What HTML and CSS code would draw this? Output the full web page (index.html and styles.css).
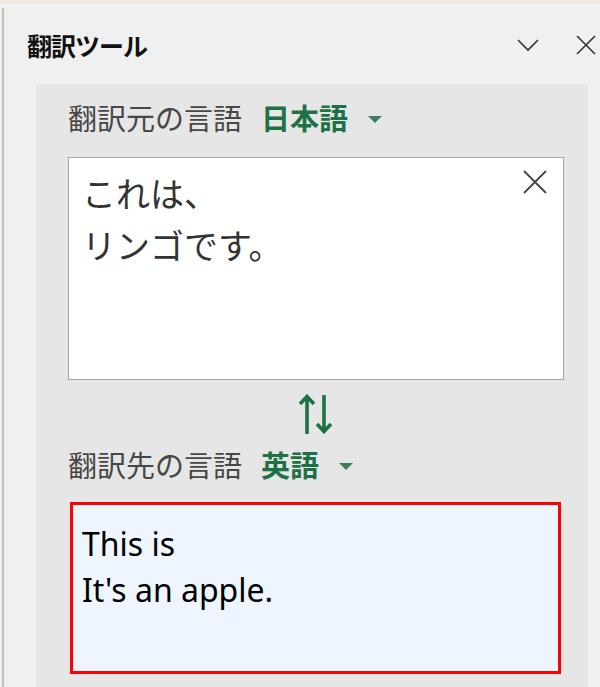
FILE: index.html
```html
<!DOCTYPE html>
<html lang="ja">
<head>
    <meta charset="UTF-8">
    <meta name="viewport" content="width=device-width, initial-scale=1.0">
    <title>翻訳ツール</title>
    <link rel="stylesheet" href="styles.css">
</head>
<body>
    <div class="topband"></div>
    <div class="pane">
        <div class="pane-header">
            <h1>翻訳ツール</h1>
            <div class="header-buttons">
                <svg class="icon" width="24" height="24" viewBox="0 0 24 24"><path d="M2 7 L12 17 L22 7" fill="none" stroke="#333" stroke-width="1.6"/></svg>
                <svg class="icon" width="20" height="20" viewBox="0 0 20 20"><path d="M1 1 L19 19 M19 1 L1 19" fill="none" stroke="#333" stroke-width="1.6"/></svg>
            </div>
        </div>
        <div class="content">
            <div class="lang-row">
                <span class="lang-label">翻訳元の言語</span>
                <span class="lang-value">日本語</span>
                <span class="caret"></span>
            </div>
            <div class="source-box">
                <p class="source-text">これは、<br>リンゴです。</p>
                <svg class="clear" width="24" height="24" viewBox="0 0 24 24"><path d="M1 1 L23 23 M23 1 L1 23" fill="none" stroke="#444" stroke-width="1.8"/></svg>
            </div>
            <div class="swap">
                <svg width="36" height="40" viewBox="0 0 36 40"><path d="M9 40 V3 M2 10 L9 2.5 L16 10 M26 1 V38 M19 30 L26 37.5 L33 30" fill="none" stroke="#1e7145" stroke-width="3.6"/></svg>
            </div>
            <div class="lang-row">
                <span class="lang-label">翻訳先の言語</span>
                <span class="lang-value">英語</span>
                <span class="caret"></span>
            </div>
            <div class="target-box">
                <p class="target-text">This is<br>It's an apple.</p>
            </div>
        </div>
    </div>
</body>
</html>
```

FILE: styles.css
```css
html, body {
    margin: 0;
    padding: 0;
}
body {
    background-color: #f0f0f0;
    font-family: "Noto Sans CJK JP", "Noto Sans", sans-serif;
    color: #333;
    height: 687px;
    overflow: hidden;
}
.topband {
    height: 4px;
    background-color: #efe9df;
}
.pane {
    border-left: 2px solid #c4c0b8;
    margin-left: 2px;
    margin-top: 4px;
    height: 679px;
    display: flex;
    flex-direction: column;
}
.pane-header {
    display: flex;
    align-items: center;
    justify-content: space-between;
    height: 74px;
    padding: 0 4px 0 23px;
}
h1 {
    font-size: 25px;
    font-weight: bold;
    color: #111;
    margin: 0;
    letter-spacing: -1px;
}
.header-buttons {
    display: flex;
    align-items: center;
    gap: 36px;
}
.content {
    background-color: #e6e6e6;
    margin: 2px 12px 0 32px;
    flex: 1;
    padding: 12px 0 0 32px;
}
.lang-row {
    display: flex;
    align-items: center;
    height: 42px;
    font-size: 29px;
}
.lang-label {
    color: #474747;
}
.lang-value {
    color: #1e7145;
    font-weight: bold;
    margin-left: 19px;
}
.caret {
    width: 0;
    height: 0;
    border-left: 7px solid transparent;
    border-right: 7px solid transparent;
    border-top: 7px solid #3c7f5a;
    margin-left: 20px;
    margin-top: 4px;
}
.source-box {
    position: relative;
    background-color: #fff;
    border: 1px solid #a5a5a5;
    width: 494px;
    height: 221px;
    margin-top: 19px;
}
.source-text {
    margin: 0;
    padding: 9px 0 0 13px;
    font-size: 34px;
    line-height: 52px;
    color: #333;
}
.clear {
    position: absolute;
    top: 12px;
    right: 16px;
}
.swap {
    display: flex;
    justify-content: center;
    width: 496px;
    padding-top: 14px;
    height: 40px;
}
.swap + .lang-row {
    margin-top: 9px;
}
.target-box {
    background-color: #eef5ff;
    border: 3px solid #ff0000;
    width: 485px;
    height: 166px;
    margin: 17px 0 0 2px;
}
.target-text {
    margin: 0;
    padding: 16px 0 0 9px;
    font-family: "Noto Sans", "Open Sans", sans-serif;
    font-size: 32px;
    line-height: 46px;
    color: #000;
}
```
